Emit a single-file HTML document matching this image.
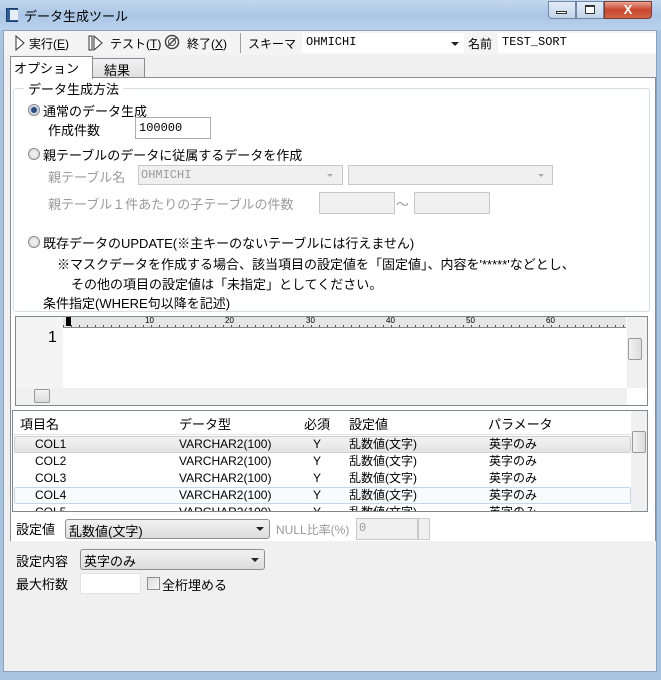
<!DOCTYPE html>
<html><head><meta charset="utf-8"><style>
*{box-sizing:border-box;margin:0;padding:0}
body{width:661px;height:680px;position:relative;overflow:hidden;background:#a9c4e0;font-family:"Liberation Sans","Noto Sans CJK JP",sans-serif;font-size:13px;color:#000}
.a{position:absolute;white-space:nowrap}
.mono{font-family:"Liberation Mono","Noto Sans CJK JP",monospace;font-size:12px}
.g{color:#9a9a9a}
.box{position:absolute;background:#fff;border:1px solid #abadb3}
.dis{background:#f0f0f0;border-color:#c8c8c8}
.combo{position:absolute;border:1px solid #8e8f8f;border-radius:3px;background:linear-gradient(#f2f2f2,#dcdcdc)}
.arr{position:absolute;right:5px;top:50%;margin-top:-2px;border-left:4px solid transparent;border-right:4px solid transparent;border-top:4px solid #222}
.radio{position:absolute;width:12px;height:12px;border-radius:50%;border:1px solid #8a8a8a;background:radial-gradient(#f4f4f4,#d6d6d6)}
</style></head><body>
<!-- title bar -->
<div class="a" style="left:0;top:0;width:661px;height:30px;background:linear-gradient(#c3d7ee,#aac6e6 50%,#b9d1ec)"></div>
<div class="a" style="left:6px;top:8px;width:12px;height:14px;background:#2f5f9a;border:1px solid #1c3d66"></div>
<div class="a" style="left:10px;top:10px;width:8px;height:10px;background:#e8eef6"></div>
<div class="a" style="left:24px;top:6px;font-size:13px">データ生成ツール</div>
<div class="a" style="left:548px;top:1px;width:28px;height:18px;border:1px solid #6f86a6;border-radius:0 0 0 4px;background:linear-gradient(#e4edf7,#c2d3e9)"></div>
<div class="a" style="left:556px;top:11px;width:11px;height:3px;background:#fff;border:1px solid #333"></div>
<div class="a" style="left:576px;top:1px;width:28px;height:18px;border:1px solid #6f86a6;background:linear-gradient(#e4edf7,#c2d3e9)"></div>
<div class="a" style="left:585px;top:5px;width:10px;height:9px;border:1px solid #333;border-top-width:2px;background:#fff"></div>
<div class="a" style="left:604px;top:1px;width:48px;height:18px;border:1px solid #7d3a2e;border-radius:0 0 4px 0;background:linear-gradient(#e8a493,#c7452c 50%,#d2664a);color:#fff;font-weight:bold;text-align:center;line-height:16px;font-size:13px">X</div>
<!-- window body -->
<div class="a" style="left:3px;top:30px;width:654px;height:642px;background:#f0f0f0;border:1px solid #8da2bd"></div>
<!-- toolbar -->
<div class="a" style="left:4px;top:31px;width:652px;height:24px;background:#f4f4f4"></div>
<svg class="a" style="left:15px;top:35px" width="10" height="16"><path d="M1 1 L9 8 L1 15 Z" fill="#fff" stroke="#333"/></svg>
<div class="a" style="left:29px;top:35px;font-size:12px">実行(<u>E</u>)</div>
<svg class="a" style="left:88px;top:35px" width="16" height="16"><rect x="1" y="1" width="3" height="14" fill="#fff" stroke="#333"/><path d="M6 1 L14 8 L6 15 Z" fill="#fff" stroke="#333"/></svg>
<div class="a" style="left:110px;top:35px;font-size:12px">テスト(<u>T</u>)</div>
<svg class="a" style="left:164px;top:34px" width="16" height="16"><circle cx="8" cy="8" r="6.5" fill="#fff" stroke="#444" stroke-width="1.5"/><circle cx="8" cy="8" r="3.5" fill="none" stroke="#444"/><path d="M4 12 L12 4" stroke="#444" stroke-width="1.5"/></svg>
<div class="a" style="left:187px;top:35px;font-size:12px">終了(<u>X</u>)</div>
<div class="a" style="left:240px;top:33px;width:1px;height:20px;background:#a0a0a0"></div>
<div class="a" style="left:248px;top:35px;font-size:12px">スキーマ</div>
<div class="box" style="left:302px;top:33px;width:162px;height:20px;border:none"></div>
<div class="a mono" style="left:306px;top:35px">OHMICHI</div>
<div class="a" style="left:451px;top:42px;border-left:4px solid transparent;border-right:4px solid transparent;border-top:4px solid #222"></div>
<div class="a" style="left:468px;top:35px;font-size:12px">名前</div>
<div class="box" style="left:498px;top:33px;width:158px;height:20px;border:none"></div>
<div class="a mono" style="left:502px;top:35px">TEST_SORT</div>
<!-- tabs -->
<div class="a" style="left:92px;top:58px;width:53px;height:20px;background:linear-gradient(#f2f2f2,#e0e0e0);border:1px solid #898c95"></div>
<div class="a" style="left:104px;top:60px">結果</div>
<div class="a" style="left:10px;top:77px;width:646px;height:464px;background:#fff;border:1px solid #898c95;border-bottom:none"></div>
<div class="a" style="left:10px;top:56px;width:83px;height:23px;background:#fff;border:1px solid #898c95;border-bottom:none"></div>
<div class="a" style="left:14px;top:58px">オプション</div>
<!-- group -->
<div class="a" style="left:13px;top:88px;width:637px;height:224px;border:1px solid #d5dfe5;border-radius:3px"></div>
<div class="a" style="left:24px;top:79px;background:#fff;padding:0 4px">データ生成方法</div>
<div class="radio" style="left:28px;top:104px;background:radial-gradient(#2a4e84 2.5px,#cfd8e4 3.5px,#eee)"></div>
<div class="a" style="left:43px;top:101px">通常のデータ生成</div>
<div class="a" style="left:48px;top:120px">作成件数</div>
<div class="box" style="left:135px;top:117px;width:76px;height:22px"></div>
<div class="a mono" style="left:139px;top:121px">100000</div>
<div class="radio" style="left:28px;top:148px"></div>
<div class="a" style="left:43px;top:145px">親テーブルのデータに従属するデータを作成</div>
<div class="a g" style="left:48px;top:167px">親テーブル名</div>
<div class="box dis" style="left:138px;top:165px;width:205px;height:20px"></div>
<div class="a mono g" style="left:141px;top:168px">OHMICHI</div>
<div class="a" style="left:327px;top:174px;border-left:3px solid transparent;border-right:3px solid transparent;border-top:3px solid #aaa"></div>
<div class="box dis" style="left:348px;top:165px;width:205px;height:20px"></div>
<div class="a" style="left:538px;top:174px;border-left:3px solid transparent;border-right:3px solid transparent;border-top:3px solid #aaa"></div>
<div class="a g" style="left:48px;top:194px">親テーブル１件あたりの子テーブルの件数</div>
<div class="box dis" style="left:319px;top:192px;width:76px;height:22px"></div>
<div class="a g" style="left:396px;top:194px">〜</div>
<div class="box dis" style="left:414px;top:192px;width:76px;height:22px"></div>
<div class="radio" style="left:28px;top:236px"></div>
<div class="a" style="left:43px;top:233px">既存データのUPDATE(※主キーのないテーブルには行えません)</div>
<div class="a" style="left:57px;top:254px">※マスクデータを作成する場合、該当項目の設定値を「固定値」、内容を'*****'などとし、</div>
<div class="a" style="left:71px;top:274px">その他の項目の設定値は「未指定」としてください。</div>
<div class="a" style="left:43px;top:293px">条件指定(WHERE句以降を記述)</div>
<!-- editor -->
<div class="a" style="left:15px;top:316px;width:633px;height:90px;border:1px solid #828790;background:#fff"></div>
<div class="a" style="left:16px;top:317px;width:47px;height:71px;background:#f4f4f4"></div>
<div class="a" style="left:48px;top:329px;font-size:16px">1</div>
<div class="a" style="left:63px;top:317px;width:563px;height:11px;background:#e6e6e6;border-bottom:1px solid #888;background-image:repeating-linear-gradient(90deg,#555 0 1px,transparent 1px 8px);background-size:100% 3px;background-repeat:repeat-x;background-position:0 8px"></div>
<div class="a" style="left:66px;top:317px;width:5px;height:9px;background:#000"></div>
<div class="a" style="left:145px;top:316px;font-size:8px">10</div><div class="a" style="left:225px;top:316px;font-size:8px">20</div><div class="a" style="left:306px;top:316px;font-size:8px">30</div><div class="a" style="left:386px;top:316px;font-size:8px">40</div><div class="a" style="left:466px;top:316px;font-size:8px">50</div><div class="a" style="left:546px;top:316px;font-size:8px">60</div>
<div class="a" style="left:627px;top:317px;width:20px;height:71px;background:#f0f0f0"></div>
<div class="a" style="left:628px;top:338px;width:14px;height:22px;border:1px solid #999;border-radius:2px;background:linear-gradient(90deg,#f3f3f3,#dcdcdc)"></div>
<div class="a" style="left:16px;top:388px;width:611px;height:17px;background:#f0f0f0"></div>
<div class="a" style="left:34px;top:389px;width:16px;height:14px;border:1px solid #999;border-radius:2px;background:linear-gradient(#f3f3f3,#dcdcdc)"></div>
<!-- list -->
<div class="a" style="left:12px;top:410px;width:636px;height:102px;border:1px solid #828790;background:#fff"></div>
<div class="a" style="left:13px;top:411px;width:618px;height:24px;background:#fff;border-bottom:1px solid #e5e5e5"></div>
<div class="a" style="left:20px;top:414px">項目名</div>
<div class="a" style="left:179px;top:414px">データ型</div>
<div class="a" style="left:304px;top:414px">必須</div>
<div class="a" style="left:349px;top:414px">設定値</div>
<div class="a" style="left:488px;top:414px">パラメータ</div>
<div class="a" style="left:14px;top:436px;width:617px;height:17px;background:linear-gradient(#f2f2f2,#e4e4e4);border:1px solid #d0d0d0;border-radius:2px"></div>
<div class="a" style="left:14px;top:487px;width:617px;height:17px;border:1px solid #c5d6ea;border-radius:2px;background:#f8fbfe"></div>
<div class="a" style="left:13px;top:436px;width:618px;height:75px;overflow:hidden">
<div style="position:absolute;left:0;top:0;line-height:17px;font-size:12px">
<div><span class="a" style="left:22px">COL1</span><span class="a" style="left:166px">VARCHAR2(100)</span><span class="a" style="left:300px">Y</span><span class="a" style="left:336px">乱数値(文字)</span><span class="a" style="left:476px">英字のみ</span>&nbsp;</div>
<div style="position:relative"><span class="a" style="left:22px">COL2</span><span class="a" style="left:166px">VARCHAR2(100)</span><span class="a" style="left:300px">Y</span><span class="a" style="left:336px">乱数値(文字)</span><span class="a" style="left:476px">英字のみ</span>&nbsp;</div>
<div style="position:relative"><span class="a" style="left:22px">COL3</span><span class="a" style="left:166px">VARCHAR2(100)</span><span class="a" style="left:300px">Y</span><span class="a" style="left:336px">乱数値(文字)</span><span class="a" style="left:476px">英字のみ</span>&nbsp;</div>
<div style="position:relative"><span class="a" style="left:22px">COL4</span><span class="a" style="left:166px">VARCHAR2(100)</span><span class="a" style="left:300px">Y</span><span class="a" style="left:336px">乱数値(文字)</span><span class="a" style="left:476px">英字のみ</span>&nbsp;</div>
<div style="position:relative"><span class="a" style="left:22px">COL5</span><span class="a" style="left:166px">VARCHAR2(100)</span><span class="a" style="left:300px">Y</span><span class="a" style="left:336px">乱数値(文字)</span><span class="a" style="left:476px">英字のみ</span>&nbsp;</div>
</div></div>
<div class="a" style="left:631px;top:411px;width:16px;height:100px;background:#f0f0f0"></div>
<div class="a" style="left:632px;top:431px;width:14px;height:22px;border:1px solid #999;border-radius:2px;background:linear-gradient(90deg,#f3f3f3,#dcdcdc)"></div>
<!-- bottom controls -->
<div class="a" style="left:16px;top:519px">設定値</div>
<div class="combo" style="left:65px;top:519px;width:205px;height:20px"><span class="a" style="left:3px;top:1px">乱数値(文字)</span><div class="arr"></div></div>
<div class="a g" style="left:276px;top:521px;font-size:12px">NULL比率(%)</div>
<div class="box dis" style="left:356px;top:518px;width:62px;height:22px"></div>
<div class="a mono g" style="left:359px;top:521px">0</div>
<div class="a" style="left:418px;top:518px;width:12px;height:22px;background:#f0f0f0;border:1px solid #ccc"></div>
<div class="a" style="left:16px;top:551px">設定内容</div>
<div class="combo" style="left:80px;top:549px;width:185px;height:21px"><span class="a" style="left:3px;top:1px">英字のみ</span><div class="arr"></div></div>
<div class="a" style="left:16px;top:574px">最大桁数</div>
<div class="box" style="left:80px;top:573px;width:61px;height:21px;border-color:#e3e3e3"></div>
<div class="a" style="left:147px;top:577px;width:13px;height:13px;border:1px solid #8f8f8f;background:linear-gradient(135deg,#dcdcdc,#f8f8f8)"></div>
<div class="a" style="left:162px;top:575px">全桁埋める</div>
</body></html>
